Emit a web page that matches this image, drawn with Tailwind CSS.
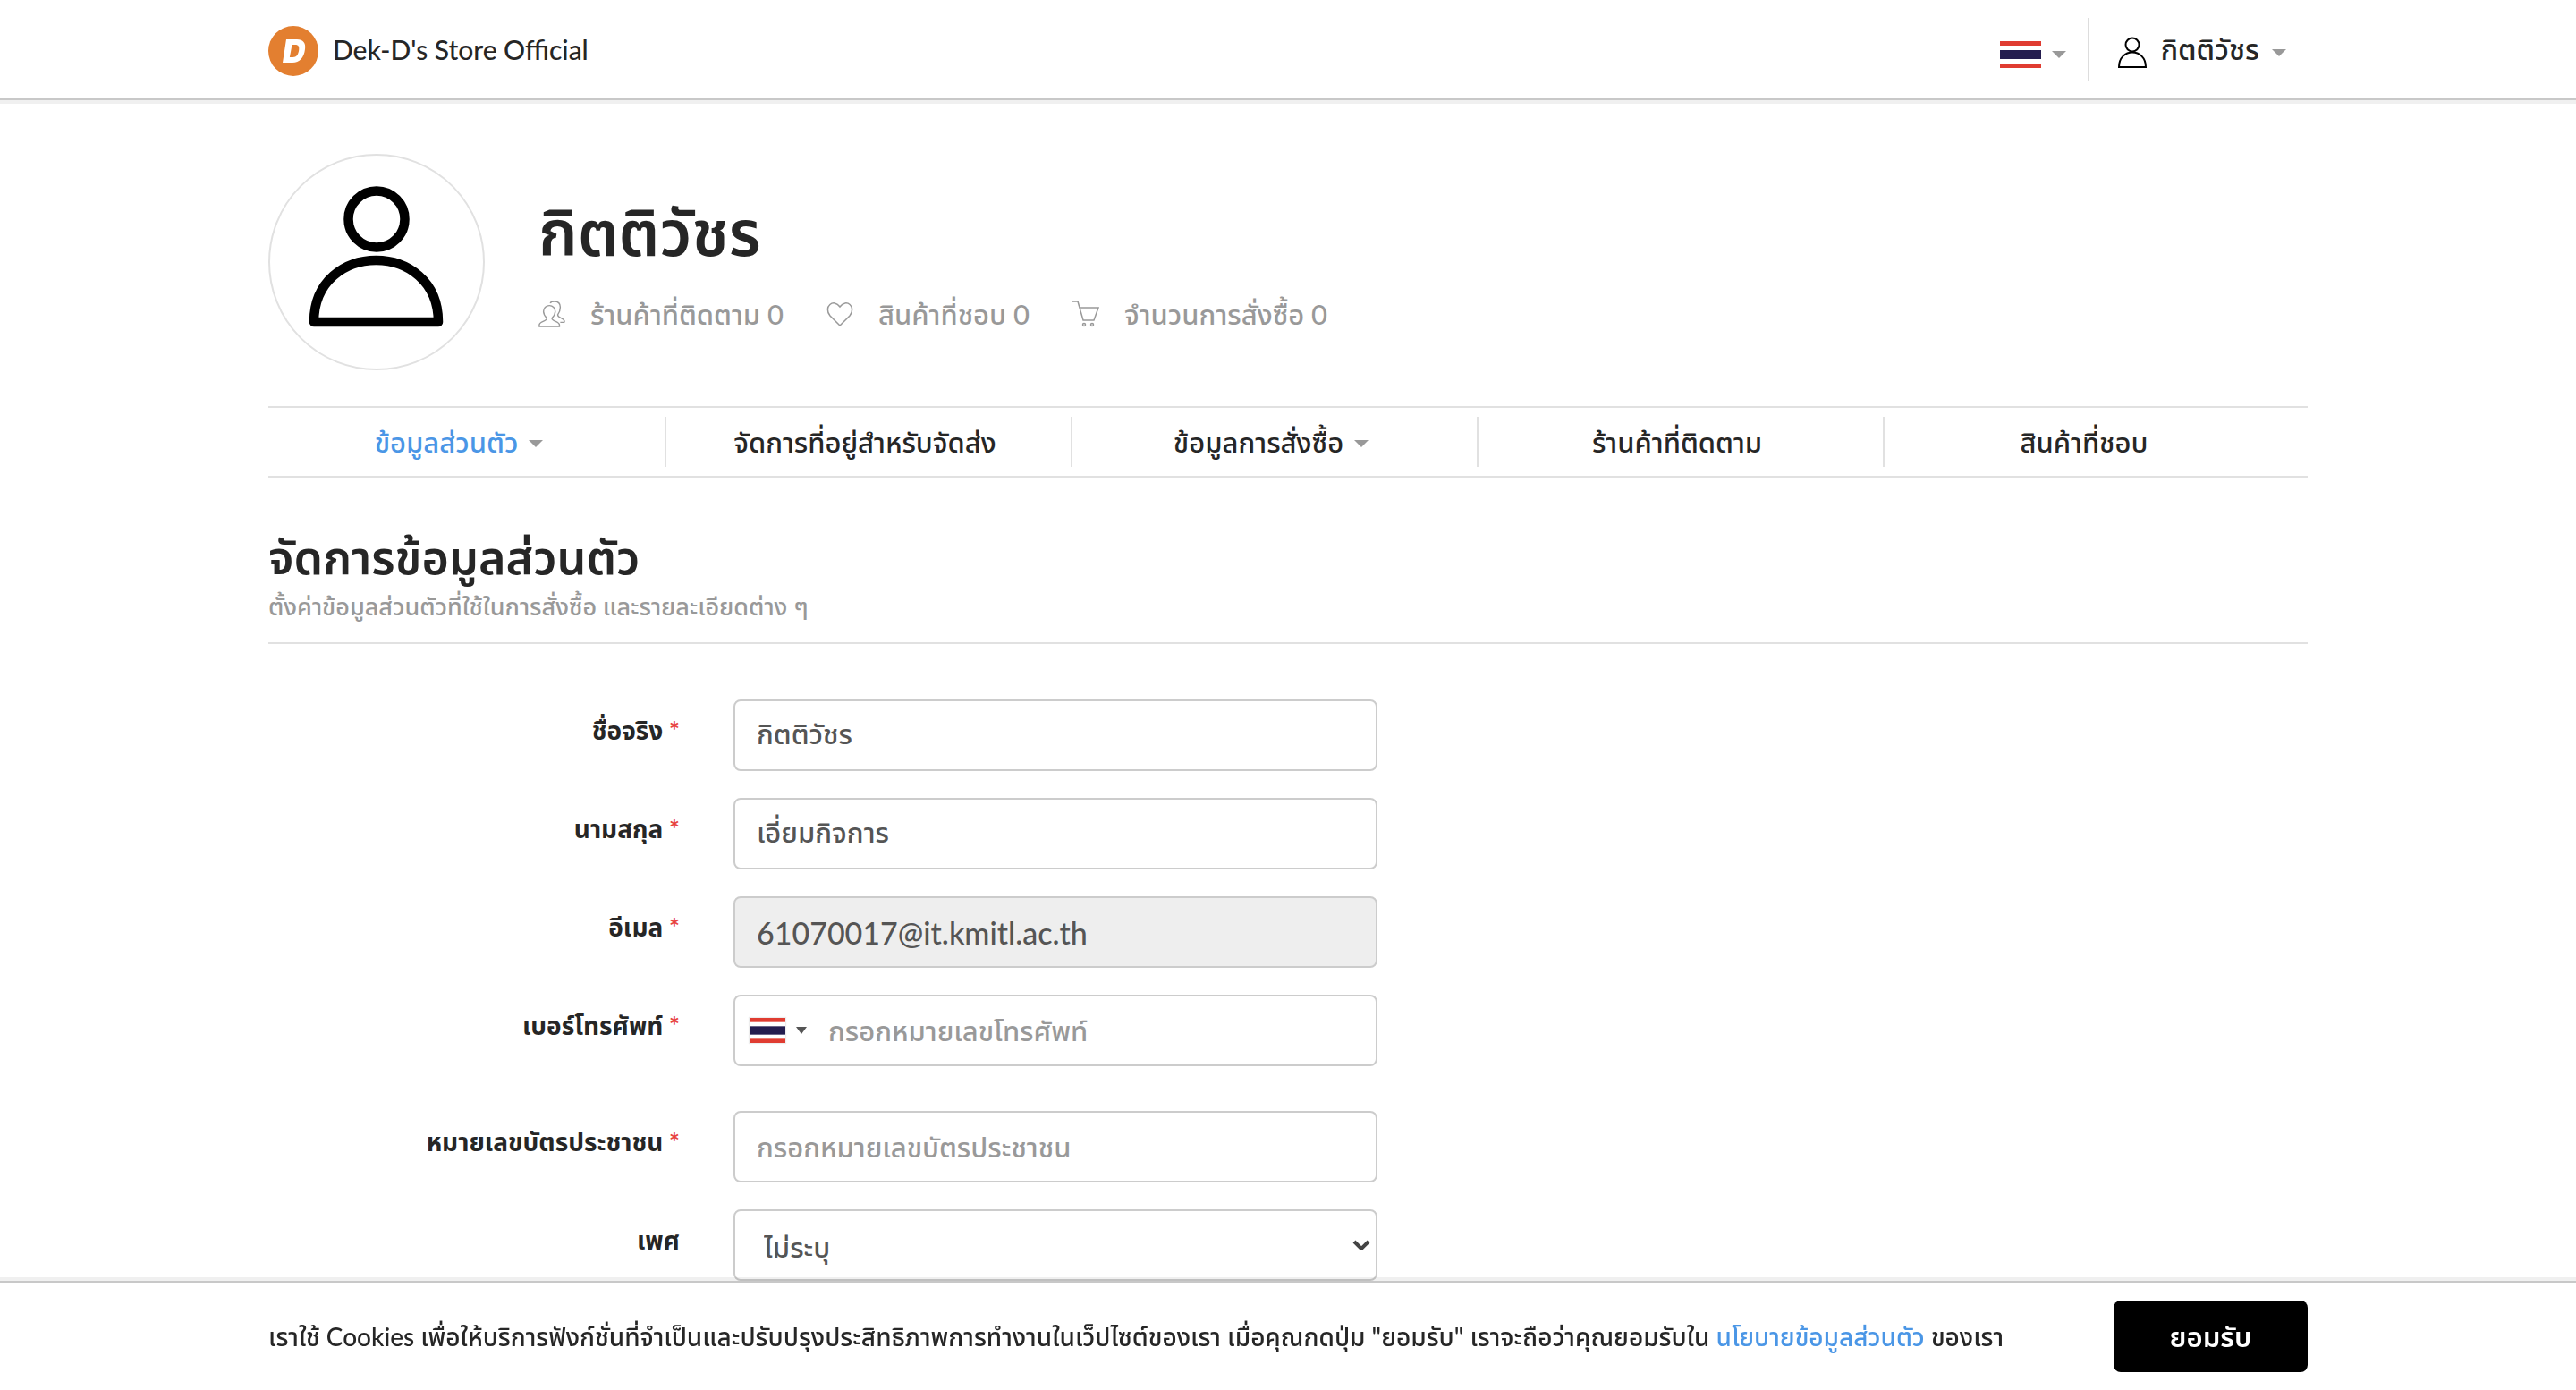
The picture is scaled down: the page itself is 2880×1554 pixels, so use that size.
<!DOCTYPE html>
<html lang="th">
<head>
<meta charset="utf-8">
<meta name="viewport" content="width=device-width, initial-scale=1">
<title>Dek-D's Store Official</title>
<script src="https://cdn.jsdelivr.net/npm/@tailwindcss/browser@4"></script>
</head>
<body class="min-h-screen bg-white font-['Lato','Noto_Sans_Thai','Noto_Sans',sans-serif] text-[#262626]">
<svg class="hidden" aria-hidden="true">
  <symbol id="flag" viewBox="0 0 46 30" preserveAspectRatio="none">
    <rect width="46" height="30" fill="#fff"/>
    <rect width="46" height="5" fill="#e03c31"/>
    <rect y="25" width="46" height="5" fill="#e03c31"/>
    <rect y="10" width="46" height="10" fill="#241d4f"/>
  </symbol>
  <symbol id="caret" viewBox="0 0 16 8"><path d="M0 0h16L8 8z" fill="currentColor"/></symbol>
</svg>

<header class="h-[116px] border-b-4 border-[#f0f0f0]">
  <div class="h-28 border-b-2 border-[#c8c8c8]">
    <div class="mx-auto flex h-full w-full max-w-[2280px] items-center justify-between">
      <a href="#" class="flex items-center gap-4 text-[30px] leading-10 font-medium">
        <svg class="mt-1 size-14" viewBox="0 0 56 56" aria-hidden="true">
          <circle cx="28" cy="28" r="28" fill="#e37f30"/>
          <path fill="#fff" fill-rule="evenodd" d="M20 15h12c7 0 10 4 9 11-1 9-6 15-14 15H16zM26.500 21l-2.600 14h3.600c4 0 6-3 6.700-8 .6-4-.7-6-4-6z"/>
        </svg>
        <span>Dek-D's Store Official</span>
      </a>
      <div class="flex items-center pr-6">
        <button type="button" aria-label="ภาษา" class="mt-3 flex items-center gap-3 pr-6 text-[#999]">
          <svg class="h-[30px] w-[46px]"><use href="#flag"/></svg>
          <svg class="h-2 w-4"><use href="#caret"/></svg>
        </button>
        <button type="button" class="flex h-[70px] items-center border-l-2 border-[#ddd] pl-8 text-[32px] font-medium">
          <svg class="mt-2 h-9 w-8" viewBox="0 0 32 36" fill="none" stroke="#000" stroke-width="2" aria-hidden="true">
            <circle cx="16" cy="9" r="7.500"/><path d="M1 34C1 12 31 12 31 34Z"/>
          </svg>
          <span class="ml-4">กิตติวัชร</span>
          <svg class="mt-2 ml-[14px] h-2 w-4 text-[#999]"><use href="#caret"/></svg>
        </button>
      </div>
    </div>
  </div>
</header>

<main class="mx-auto w-full max-w-[2280px] pb-24">
  <section class="flex items-center gap-[60px] pt-14">
    <svg class="size-[242px]" viewBox="0 0 242 242" fill="none" aria-hidden="true">
      <circle cx="121" cy="121" r="120" stroke="#e1e1e1" stroke-width="2"/>
      <circle cx="121" cy="73" r="31.500" stroke="#000" stroke-width="10.500"/>
      <path d="M51 188C51 96 190 96 190 188Z" stroke="#000" stroke-width="10.500" stroke-linejoin="round"/>
    </svg>
    <div>
      <h1 class="text-[71px] leading-[88px] font-semibold">กิตติวัชร</h1>
      <ul class="mt-7 flex gap-12 text-[31px] leading-10 font-medium text-[#999]">
        <li class="flex items-center gap-7">
          <svg class="size-[30px]" viewBox="1 1 32 32" fill="none" stroke="currentColor" stroke-width="1.500" aria-hidden="true"><path d="M2 32v-2c0-4 9-4 9-8-3-3-4-5-4-8 0-4 3-7 7-7s7 3 7 7c0 3-1 5-4 8 0 4 9 4 9 8v2zM15 4c1-2 3-2 5-2 5 0 7 3 7 7s-1 6-3 9c0 4 8 4 8 8 0 1 0 1-1 1h-4"/></svg>
          <span>ร้านค้าที่ติดตาม 0</span>
        </li>
        <li class="flex items-center gap-7">
          <svg class="size-[30px]" viewBox="0 0 30 30" fill="none" stroke="currentColor" stroke-width="1.500" aria-hidden="true"><path d="M15 28L4 17C-4 7 8-3 15 7c7-10 19 0 11 10z"/></svg>
          <span>สินค้าที่ชอบ 0</span>
        </li>
        <li class="flex items-center gap-7">
          <svg class="size-[30px]" viewBox="0 0 30 30" fill="none" stroke="currentColor" stroke-width="1.500" aria-hidden="true"><path d="M0 1h6l6 21h12l5-14H8"/><circle cx="13" cy="27" r="1.500"/><circle cx="22" cy="27" r="1.500"/></svg>
          <span>จำนวนการสั่งซื้อ 0</span>
        </li>
      </ul>
    </div>
  </section>

  <nav class="mt-10 h-20 border-y-2 border-[#e1e1e1] py-[10px]">
    <ul class="mr-[19px] -ml-[9px] grid h-14 grid-cols-5 text-[31px] font-medium">
      <li class="border-r-2 border-[#e1e1e1]"><a href="#" class="flex h-full items-center justify-center gap-3 pr-2 text-[#4a96e6]">ข้อมูลส่วนตัว <svg class="mt-1 h-2 w-4 text-[#999]"><use href="#caret"/></svg></a></li>
      <li class="border-r-2 border-[#e1e1e1]"><a href="#" class="flex h-full items-center justify-center pr-2">จัดการที่อยู่สำหรับจัดส่ง</a></li>
      <li class="border-r-2 border-[#e1e1e1]"><a href="#" class="flex h-full items-center justify-center gap-3 pr-2">ข้อมูลการสั่งซื้อ <svg class="mt-1 h-2 w-4 text-[#999]"><use href="#caret"/></svg></a></li>
      <li class="border-r-2 border-[#e1e1e1]"><a href="#" class="flex h-full items-center justify-center pr-2">ร้านค้าที่ติดตาม</a></li>
      <li><a href="#" class="flex h-full items-center justify-center pr-2">สินค้าที่ชอบ</a></li>
    </ul>
  </nav>

  <header class="mt-14 h-[130px] border-b-2 border-[#e1e1e1]">
    <h2 class="text-[52px] leading-[64px] font-semibold">จัดการข้อมูลส่วนตัว</h2>
    <p class="pt-1 text-[27px] leading-10 font-medium text-[#999]">ตั้งค่าข้อมูลส่วนตัวที่ใช้ในการสั่งซื้อ และรายละเอียดต่าง ๆ</p>
  </header>

  <form class="mt-[62px] flex flex-col gap-[30px] text-[31px] font-medium text-[#555]">
    <div class="flex gap-[60px]">
      <label for="first" class="w-[460px] pt-[14px] text-right text-[28px] leading-10 font-bold text-[#262626]">ชื่อจริง <span class="text-[#e8423b]">*</span></label>
      <input id="first" value="กิตติวัชร" class="h-20 w-[720px] rounded-lg border-2 border-[#ccc] px-6">
    </div>
    <div class="flex gap-[60px]">
      <label for="last" class="w-[460px] pt-[14px] text-right text-[28px] leading-10 font-bold text-[#262626]">นามสกุล <span class="text-[#e8423b]">*</span></label>
      <input id="last" value="เอี่ยมกิจการ" class="h-20 w-[720px] rounded-lg border-2 border-[#ccc] px-6">
    </div>
    <div class="flex gap-[60px]">
      <label for="email" class="w-[460px] pt-[14px] text-right text-[28px] leading-10 font-bold text-[#262626]">อีเมล <span class="text-[#e8423b]">*</span></label>
      <input id="email" type="email" readonly value="61070017@it.kmitl.ac.th" class="h-20 w-[720px] rounded-lg border-2 border-[#ccc] bg-[#eee] px-6 text-[34px]">
    </div>
    <div class="mb-5 flex gap-[60px]">
      <label for="phone" class="w-[460px] pt-[14px] text-right text-[28px] leading-10 font-bold text-[#262626]">เบอร์โทรศัพท์ <span class="text-[#e8423b]">*</span></label>
      <div class="flex h-20 w-[720px] items-center rounded-lg border-2 border-[#ccc] pl-4">
        <button type="button" aria-label="รหัสประเทศ" class="flex items-center gap-3">
          <svg class="h-7 w-10 shadow-[0_0_1px_1px_#eee]"><use href="#flag"/></svg>
          <svg class="h-2 w-3" viewBox="0 0 12 8" aria-hidden="true"><path d="M0 0h12L6 8z" fill="#555"/></svg>
        </button>
        <input id="phone" type="tel" placeholder="กรอกหมายเลขโทรศัพท์" class="ml-6 h-full min-w-0 flex-1 placeholder:text-[#999]">
      </div>
    </div>
    <div class="flex gap-[60px]">
      <label for="citizen" class="w-[460px] pt-[14px] text-right text-[28px] leading-10 font-bold text-[#262626]">หมายเลขบัตรประชาชน <span class="text-[#e8423b]">*</span></label>
      <input id="citizen" placeholder="กรอกหมายเลขบัตรประชาชน" class="h-20 w-[720px] rounded-lg border-2 border-[#ccc] px-6 placeholder:text-[#999]">
    </div>
    <div class="flex gap-[60px]">
      <label for="sex" class="w-[460px] pt-[14px] text-right text-[28px] leading-10 font-bold text-[#262626]">เพศ</label>
      <div class="relative w-[720px]">
        <select id="sex" class="h-20 w-full appearance-none rounded-lg border-2 border-[#ccc] bg-white px-8 pt-1"><option>ไม่ระบุ</option></select>
        <svg class="pointer-events-none absolute top-[34px] right-2 h-3 w-5" viewBox="0 0 20 12" fill="none" stroke="#444" stroke-width="4" aria-hidden="true"><path d="M2 2l8 8 8-8"/></svg>
      </div>
    </div>
  </form>
</main>

<aside class="fixed inset-x-0 bottom-0 border-t-2 border-[#c8c8c8] bg-white shadow-[0_-4px_0_rgba(0,0,0,0.06)]">
  <div class="mx-auto flex h-[120px] max-w-[2280px] items-center justify-between">
    <p class="text-[28px] font-medium whitespace-nowrap">เราใช้ Cookies เพื่อให้บริการฟังก์ชั่นที่จำเป็นและปรับปรุงประสิทธิภาพการทำงานในเว็ปไซต์ของเรา เมื่อคุณกดปุ่ม "ยอมรับ" เราจะถือว่าคุณยอมรับใน <a href="#" class="text-[#4a96e6]">นโยบายข้อมูลส่วนตัว</a> ของเรา</p>
    <button type="button" class="h-20 w-[217px] shrink-0 rounded-lg bg-black text-[31px] font-semibold text-white">ยอมรับ</button>
  </div>
</aside>
</body>
</html>
